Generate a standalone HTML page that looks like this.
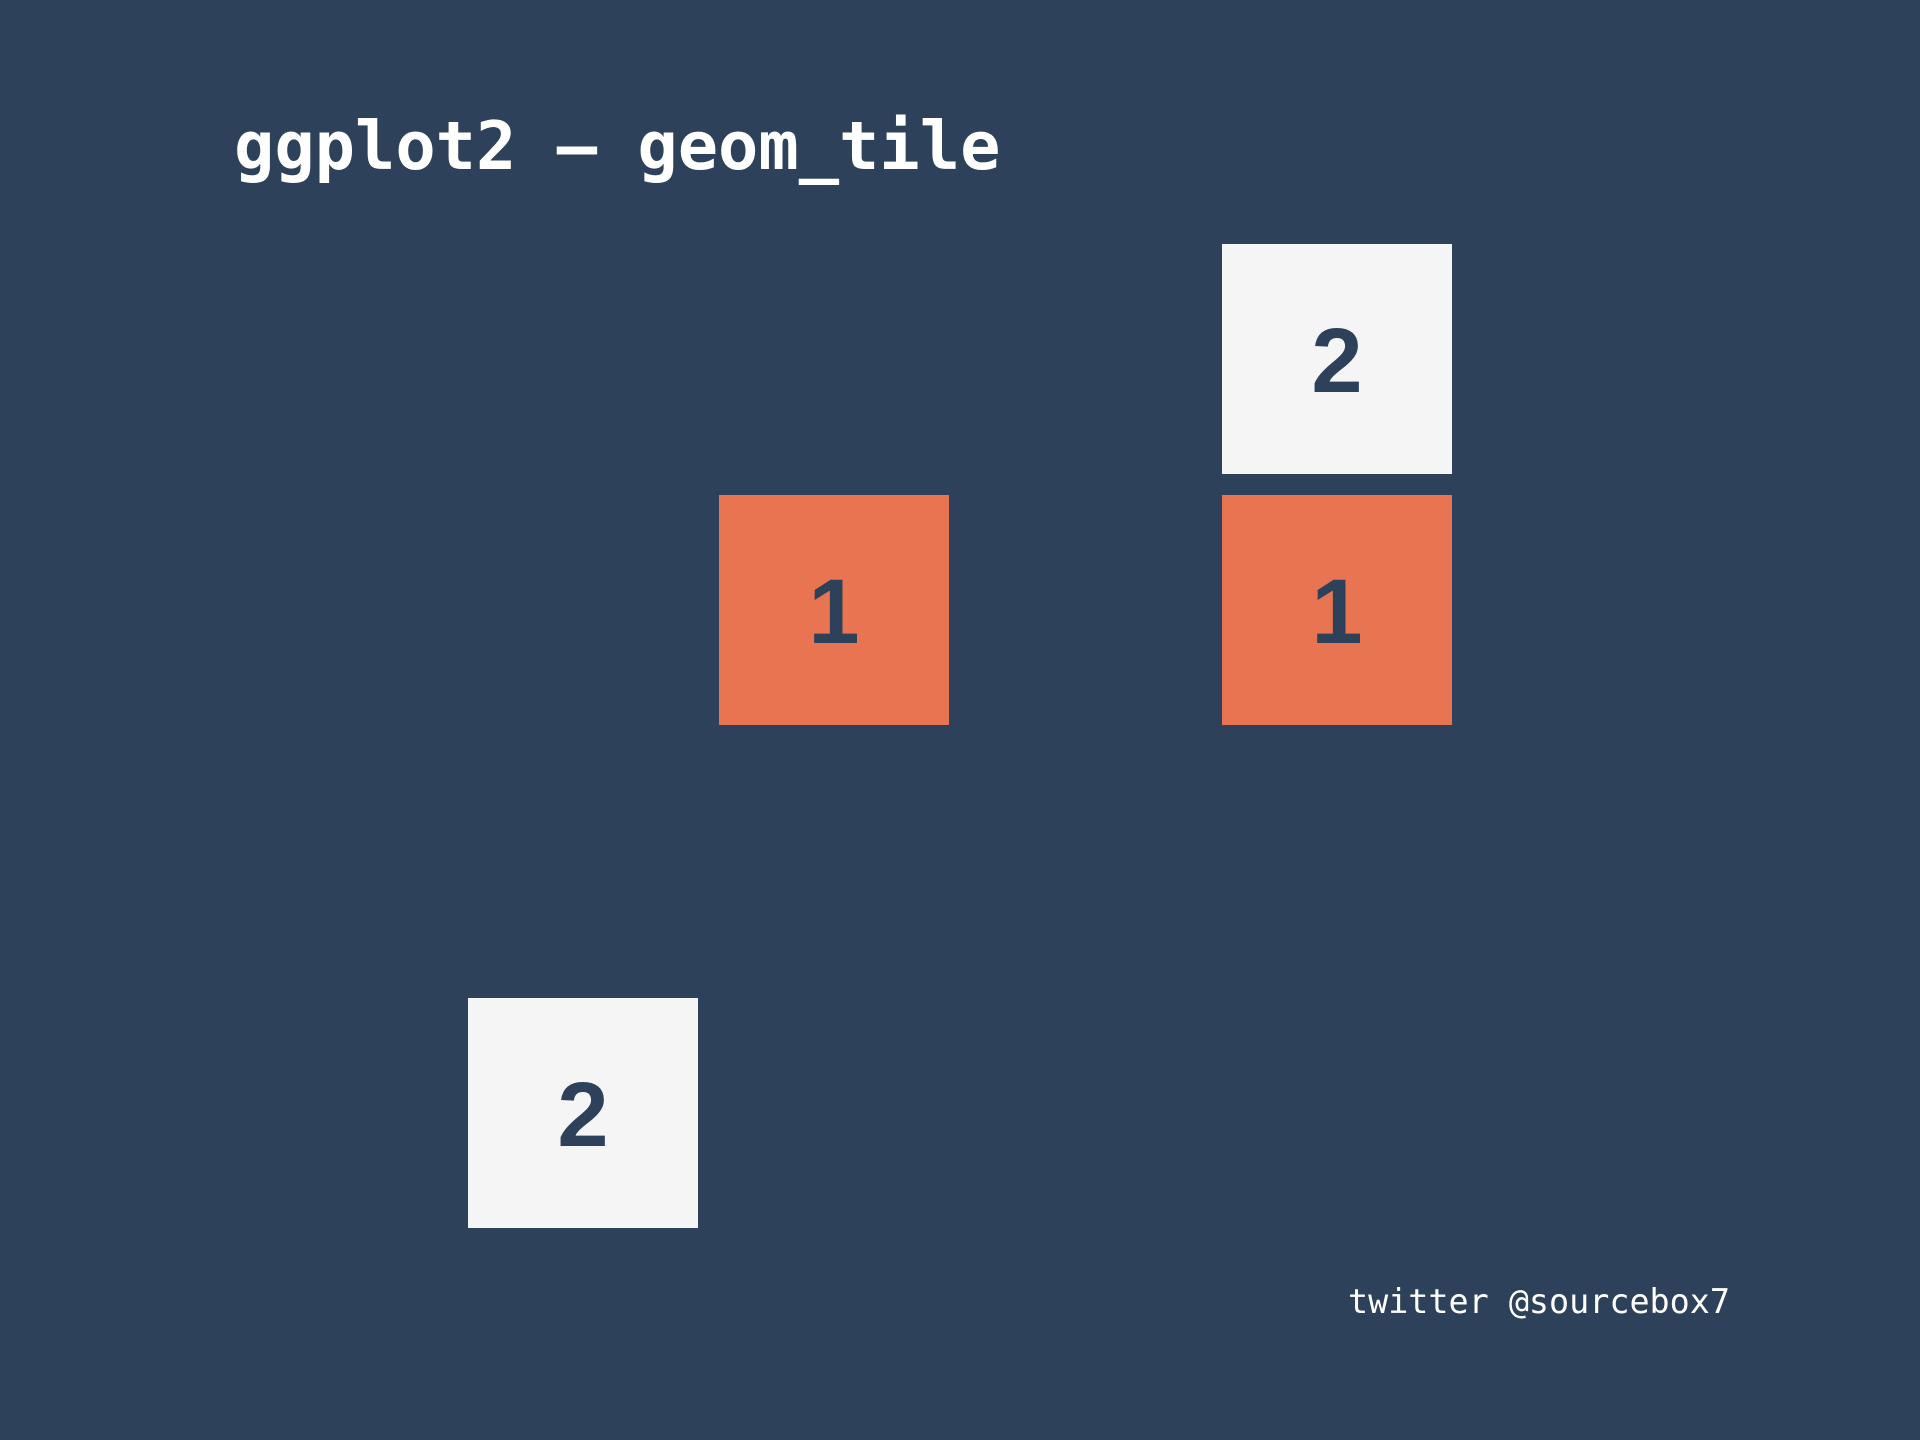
<!DOCTYPE html>
<html><head><meta charset="utf-8"><style>
html,body{margin:0;padding:0}
body{width:1920px;height:1440px;background:#2e415b;position:relative;overflow:hidden}
.t{position:absolute;font-family:"DejaVu Sans Mono","Liberation Mono",monospace;color:#fff;white-space:nowrap}
.tile{position:absolute;width:230px;height:230px;display:flex;align-items:center;justify-content:center;font-family:"Liberation Sans","DejaVu Sans",sans-serif;font-weight:bold;font-size:92px;color:#2e415b;box-sizing:border-box;padding-top:5px}
.w{background:#f5f5f5}.o{background:#e87452}
</style></head><body>
<div class="t" style="left:234px;top:103px;font-size:67px;font-weight:bold;line-height:86px">ggplot2 – geom_tile</div>
<div class="tile w" style="left:1222px;top:244px">2</div>
<div class="tile o" style="left:719px;top:495px">1</div>
<div class="tile o" style="left:1222px;top:495px">1</div>
<div class="tile w" style="left:468px;top:998px">2</div>
<div class="t" style="left:1348px;top:1280px;font-size:33.4px;line-height:44px">twitter @sourcebox7</div>
</body></html>
